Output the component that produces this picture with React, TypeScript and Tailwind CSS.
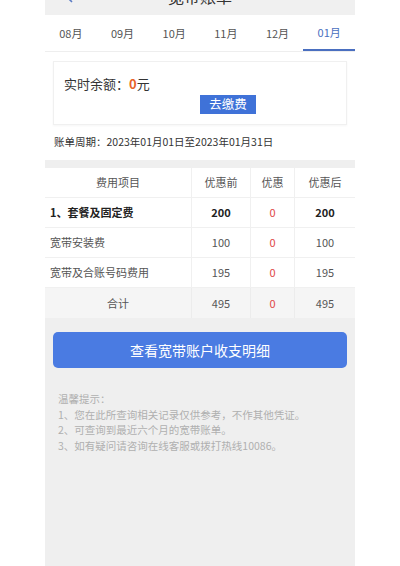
import React from 'react'

const months = ['08月', '09月', '10月', '11月', '12月', '01月']

const rows = [
  { name: '1、套餐及固定费', before: '200', off: '0', after: '200', bold: true },
  { name: '宽带安装费', before: '100', off: '0', after: '100' },
  { name: '宽带及合账号码费用', before: '195', off: '0', after: '195' },
]

const tips = [
  '温馨提示：',
  '1、您在此所查询相关记录仅供参考，不作其他凭证。',
  '2、可查询到最近六个月的宽带账单。',
  '3、如有疑问请咨询在线客服或拨打热线10086。',
]

const App = () => {
  return (
    <div className="w-[400px] h-[566px] bg-white flex justify-center" style={{ fontFamily: '"Noto Sans CJK SC", "Noto Sans", sans-serif' }}>
      <div className="w-[310px] h-full bg-[#efefef] flex flex-col overflow-hidden">
        {/* header, mostly scrolled off */}
        <header className="h-[15px] overflow-hidden bg-[#f0f0f0] shrink-0">
          <div className="relative h-[44px] -mt-[26px] flex items-center justify-center">
            <svg className="absolute left-[18px] w-[12px] h-[16px]" viewBox="0 0 12 16" fill="none">
              <path d="M9 2 L3 8 L9 14" stroke="#5a7bc4" strokeWidth="1.6" />
            </svg>
            <span className="text-[16px] text-[#333]">宽带账单</span>
          </div>
        </header>

        {/* month tabs */}
        <div className="h-[37px] bg-white border-b border-[#eeeeee] flex shrink-0">
          {months.map((m, i) => (
            <div
              key={m}
              className={
                i === months.length - 1
                  ? 'flex-1 flex items-center justify-center text-[11px] text-[#4a6fc0] border-b-2 border-[#4a6fc0]'
                  : 'flex-1 flex items-center justify-center text-[11px] text-[#555]'
              }
            >
              {m}
            </div>
          ))}
        </div>

        {/* balance */}
        <div className="bg-white pt-[9px] pb-[11px] shrink-0">
          <div className="mx-[8px] h-[64px] border border-[#f0f0f0] shadow-[0_1px_2px_rgba(0,0,0,0.04)] px-[10px] pt-[13px]">
            <div className="text-[13px] text-[#333] leading-[18px]">
              实时余额：<span className="text-[#e8632a] font-bold">0</span>元
            </div>
            <div className="ml-[136px] mt-[2px] w-[56px] h-[19px] bg-[#3f72d8] text-white text-[12.5px] flex items-center justify-center">
              去缴费
            </div>
          </div>
          <div className="mt-[10px] px-[9px] text-[10.5px] text-[#333] leading-[14px]">
            账单周期：2023年01月01日至2023年01月31日
          </div>
        </div>

        {/* fee table */}
        <div className="mt-[8px] bg-white shrink-0 text-[11px] text-[#555]">
          <div className="grid grid-cols-[147px_59px_44px_60px] h-[30px] border-b border-[#f0f0f0]">
            <div className="flex items-center justify-center border-r border-[#f0f0f0]">费用项目</div>
            <div className="flex items-center justify-center border-r border-[#f0f0f0]">优惠前</div>
            <div className="flex items-center justify-center border-r border-[#f0f0f0]">优惠</div>
            <div className="flex items-center justify-center">优惠后</div>
          </div>
          {rows.map((r) => (
            <div
              key={r.name}
              className={
                r.bold
                  ? 'grid grid-cols-[147px_59px_44px_60px] h-[30px] border-b border-[#f0f0f0] font-bold text-[#222]'
                  : 'grid grid-cols-[147px_59px_44px_60px] h-[30px] border-b border-[#f0f0f0]'
              }
            >
              <div className="flex items-center pl-[5px] border-r border-[#f0f0f0]">{r.name}</div>
              <div className="flex items-center justify-center border-r border-[#f0f0f0]">{r.before}</div>
              <div className="flex items-center justify-center border-r border-[#f0f0f0] text-[#e04848] font-normal">{r.off}</div>
              <div className="flex items-center justify-center">{r.after}</div>
            </div>
          ))}
          <div className="grid grid-cols-[147px_59px_44px_60px] h-[30px] bg-[#f5f5f5]">
            <div className="flex items-center justify-center border-r border-[#ececec]">合计</div>
            <div className="flex items-center justify-center border-r border-[#ececec]">495</div>
            <div className="flex items-center justify-center border-r border-[#ececec] text-[#e04848]">0</div>
            <div className="flex items-center justify-center">495</div>
          </div>
        </div>

        {/* detail button */}
        <div className="mt-[14px] mx-[8px] h-[36px] rounded-[5px] bg-[#4a7be2] text-white text-[14px] flex items-center justify-center shrink-0">
          查看宽带账户收支明细
        </div>

        {/* tips */}
        <div className="mt-[23px] px-[13px] text-[10.5px] leading-[15.5px] text-[#b0b0b0]">
          {tips.map((t) => (
            <div key={t}>{t}</div>
          ))}
        </div>
      </div>
    </div>
  )
}

export default App
